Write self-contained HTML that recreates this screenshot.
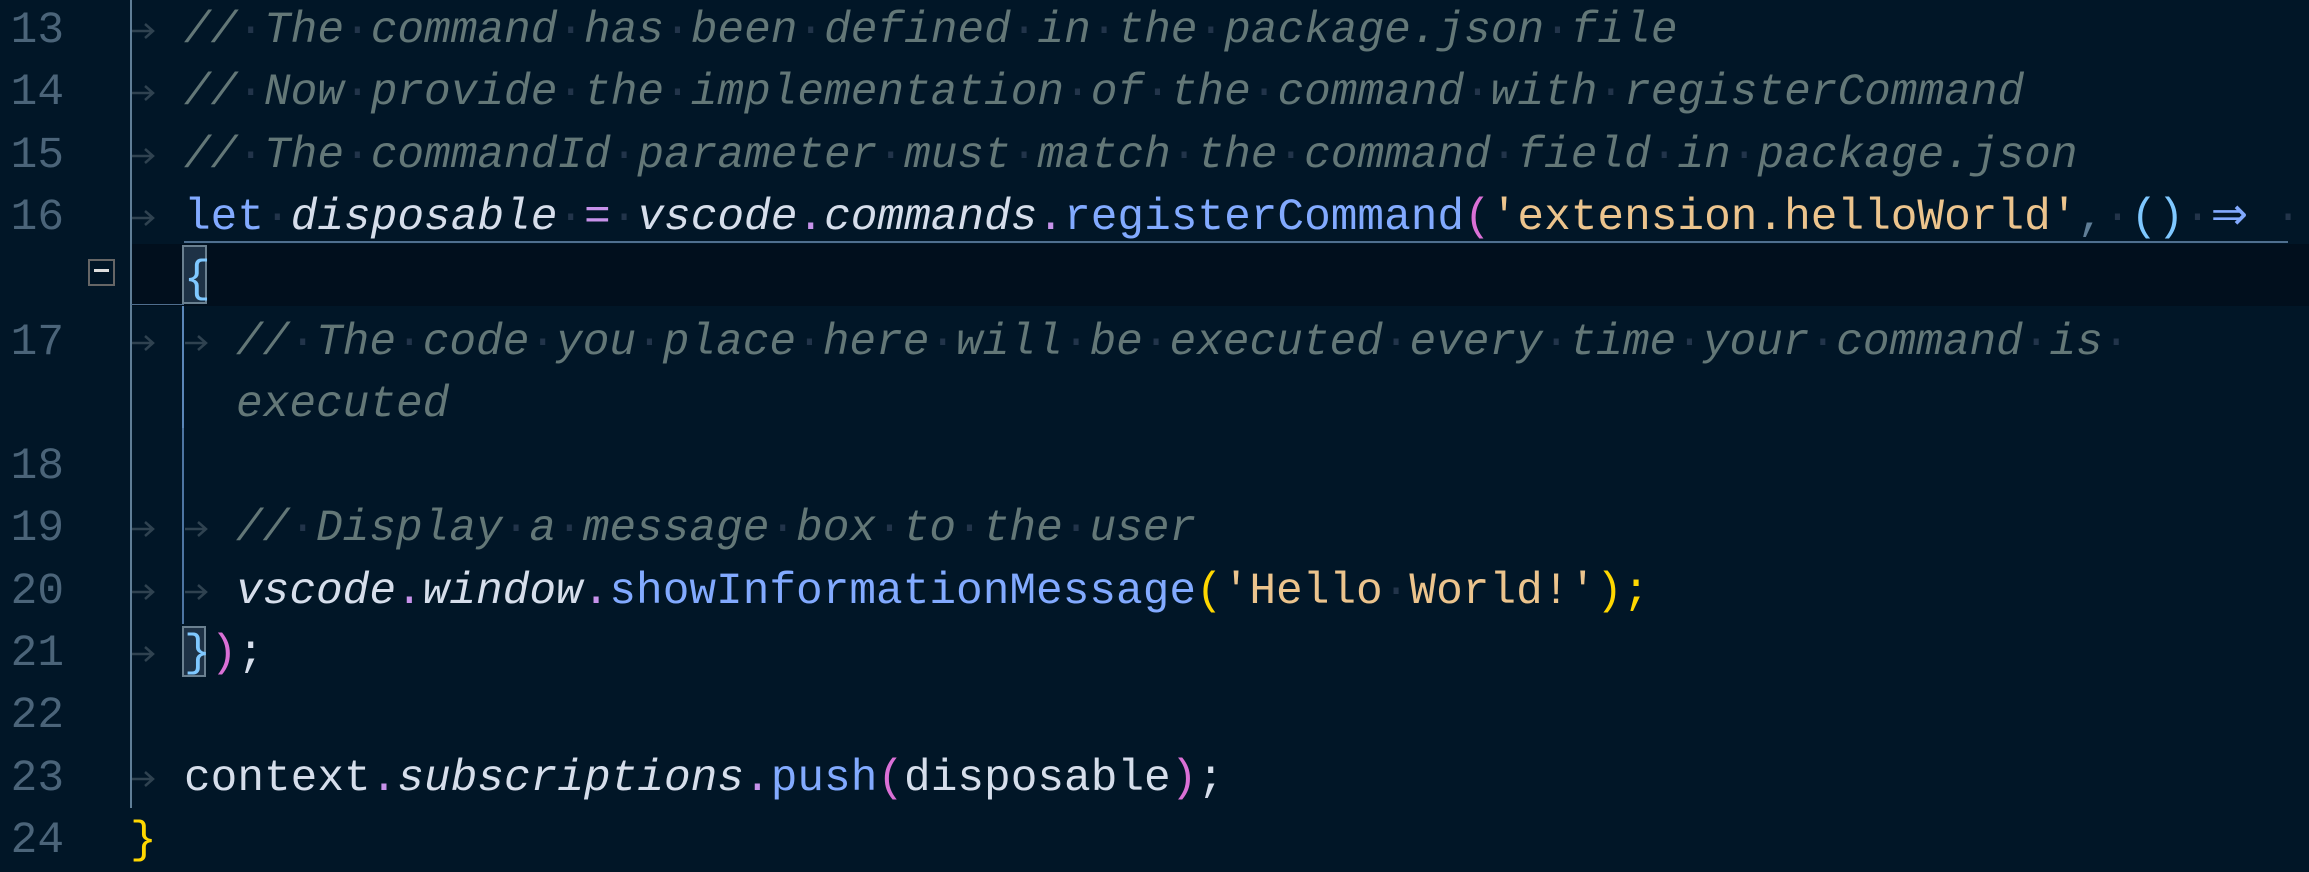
<!DOCTYPE html>
<html><head><meta charset="utf-8"><style>
html,body{margin:0;padding:0;}
body{width:2309px;height:867px;background:#011627;position:relative;overflow:hidden;font-family:"Liberation Mono",monospace;font-size:44.45px;}
.r{position:absolute;left:0;width:2309px;height:62.3px;line-height:62.3px;}
.n{position:absolute;left:0;width:64px;text-align:right;color:#4b6479;}
.c{position:absolute;white-space:pre;color:#d6deeb;}
.cm{color:#637777;font-style:italic;}
.d{color:#22344a;font-style:normal;}
.i{font-style:italic;color:#d6deeb;}
.kw{color:#82aaff;}
.fn{color:#82aaff;}
.p{color:#c792ea;}
.s{color:#ecc48d;}
.pk{color:#da70d6;}
.lb{color:#7fc8ff;}
.y{color:#ffd700;}
.g{color:#5f7e97;}
.ar{position:absolute;width:24px;height:20px;}
.gl{position:absolute;width:2px;}
</style></head><body>
<div style="position:absolute;left:131px;top:244px;width:2178px;height:62px;background:#010f1d;"></div>
<div style="position:absolute;left:184px;top:241px;width:2104px;height:2px;background:#4f6f8f;"></div>
<div class="gl" style="left:130px;top:0;height:808px;background:#5f7e97;"></div>
<div class="gl" style="left:182px;top:306px;height:122px;background:#5a86b8;"></div>
<div class="gl" style="left:182px;top:428px;height:196px;background:#5a86b8;opacity:.85"></div>
<div style="position:absolute;left:131px;top:304px;width:53px;height:1px;background:#4f6f8f;"></div>
<div style="position:absolute;left:88px;top:259px;width:23px;height:23px;border:2px solid #666;"></div>
<div style="position:absolute;left:94px;top:269px;width:15px;height:3px;background:#ddd;"></div>
<div style="position:absolute;left:182px;top:245px;width:25px;height:59px;background:#1e3246;border:2px solid #6a8090;box-sizing:border-box;"></div>
<div style="position:absolute;left:182px;top:626px;width:24px;height:51px;background:#1e3246;border:2px solid #6a8090;box-sizing:border-box;"></div>

<svg width="0" height="0" style="position:absolute"><defs><symbol id="a" viewBox="0 0 24 20"><path d="M1 10H22M14 3L22 10L14 17" fill="none" stroke="#2f4250" stroke-width="2.5"/></symbol></defs></svg>

<div style="position:absolute;left:0;top:4px;width:2309px;height:867px;">
<div class="r" style="top:-4px"><span class="n">13</span><svg class="ar" style="left:131px;top:21px"><use href="#a"/></svg><span class="c cm" style="left:184px">//<span class="d">·</span>The<span class="d">·</span>command<span class="d">·</span>has<span class="d">·</span>been<span class="d">·</span>defined<span class="d">·</span>in<span class="d">·</span>the<span class="d">·</span>package.json<span class="d">·</span>file</span></div>
<div class="r" style="top:58.3px"><span class="n">14</span><svg class="ar" style="left:131px;top:21px"><use href="#a"/></svg><span class="c cm" style="left:184px">//<span class="d">·</span>Now<span class="d">·</span>provide<span class="d">·</span>the<span class="d">·</span>implementation<span class="d">·</span>of<span class="d">·</span>the<span class="d">·</span>command<span class="d">·</span>with<span class="d">·</span>registerCommand</span></div>
<div class="r" style="top:120.6px"><span class="n">15</span><svg class="ar" style="left:131px;top:21px"><use href="#a"/></svg><span class="c cm" style="left:184px">//<span class="d">·</span>The<span class="d">·</span>commandId<span class="d">·</span>parameter<span class="d">·</span>must<span class="d">·</span>match<span class="d">·</span>the<span class="d">·</span>command<span class="d">·</span>field<span class="d">·</span>in<span class="d">·</span>package.json</span></div>
<div class="r" style="top:182.9px"><span class="n">16</span><svg class="ar" style="left:131px;top:21px"><use href="#a"/></svg><span class="c" style="left:184px"><span class="kw">let</span><span class="d">·</span><span class="i">disposable</span><span class="d">·</span><span class="p">=</span><span class="d">·</span><span class="i">vscode</span><span class="p">.</span><span class="i">commands</span><span class="p">.</span><span class="fn">registerCommand</span><span class="pk">(</span><span class="s">'extension.helloWorld'</span><span class="g">,</span><span class="d">·</span><span class="lb">()</span><span class="d">·</span><span class="fn">⇒ </span><span class="d">·</span></span></div>
<div class="r" style="top:245.2px"><span class="c lb" style="left:184px">{</span></div>
<div class="r" style="top:307.5px"><span class="n">17</span><svg class="ar" style="left:131px;top:21px"><use href="#a"/></svg><svg class="ar" style="left:184px;top:21px"><use href="#a"/></svg><span class="c cm" style="left:236px">//<span class="d">·</span>The<span class="d">·</span>code<span class="d">·</span>you<span class="d">·</span>place<span class="d">·</span>here<span class="d">·</span>will<span class="d">·</span>be<span class="d">·</span>executed<span class="d">·</span>every<span class="d">·</span>time<span class="d">·</span>your<span class="d">·</span>command<span class="d">·</span>is<span class="d">·</span></span></div>
<div class="r" style="top:369.8px"><span class="c cm" style="left:236px">executed</span></div>
<div class="r" style="top:432.1px"><span class="n">18</span></div>
<div class="r" style="top:494.4px"><span class="n">19</span><svg class="ar" style="left:131px;top:21px"><use href="#a"/></svg><svg class="ar" style="left:184px;top:21px"><use href="#a"/></svg><span class="c cm" style="left:236px">//<span class="d">·</span>Display<span class="d">·</span>a<span class="d">·</span>message<span class="d">·</span>box<span class="d">·</span>to<span class="d">·</span>the<span class="d">·</span>user</span></div>
<div class="r" style="top:556.7px"><span class="n">20</span><svg class="ar" style="left:131px;top:21px"><use href="#a"/></svg><svg class="ar" style="left:184px;top:21px"><use href="#a"/></svg><span class="c" style="left:236px"><span class="i">vscode</span><span class="p">.</span><span class="i">window</span><span class="p">.</span><span class="fn">showInformationMessage</span><span class="y">(</span><span class="s">'Hello<span class="d">·</span>World!'</span><span class="y">)</span><span class="y">;</span></span></div>
<div class="r" style="top:619px"><span class="n">21</span><svg class="ar" style="left:131px;top:21px"><use href="#a"/></svg><span class="c" style="left:184px"><span class="lb">}</span><span class="pk">)</span>;</span></div>
<div class="r" style="top:681.3px"><span class="n">22</span></div>
<div class="r" style="top:743.6px"><span class="n">23</span><svg class="ar" style="left:131px;top:21px"><use href="#a"/></svg><span class="c" style="left:184px">context<span class="p">.</span><span class="i">subscriptions</span><span class="p">.</span><span class="fn">push</span><span class="pk">(</span>disposable<span class="pk">)</span>;</span></div>
<div class="r" style="top:805.9px"><span class="n">24</span><span class="c y" style="left:130px">}</span></div>
</div>
</body></html>
